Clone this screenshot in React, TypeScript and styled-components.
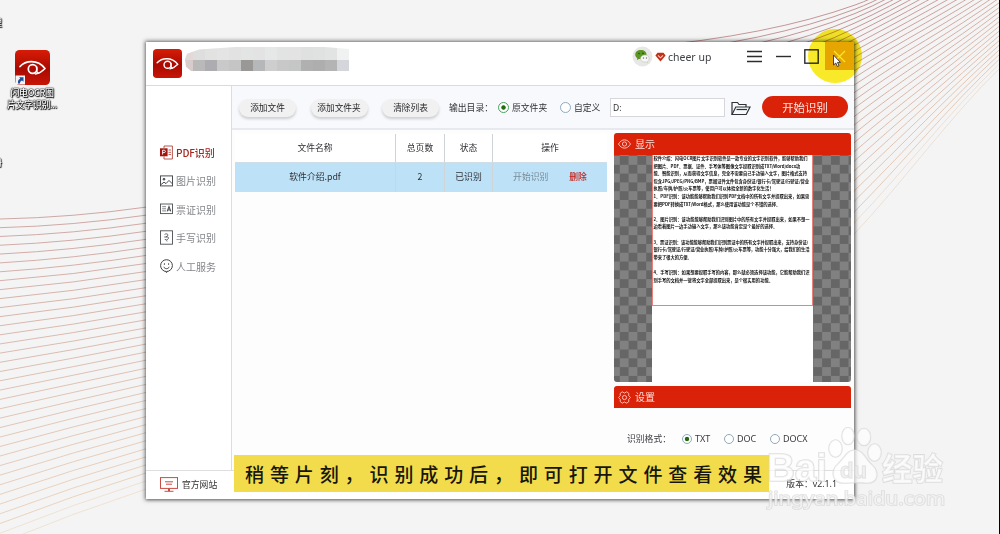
import React from "react";
import styled, { createGlobalStyle } from "styled-components";

const Global = createGlobalStyle`
  * { box-sizing: border-box; }
  html, body { margin: 0; padding: 0; overflow: hidden; }
  body { font-family: "Noto Sans", "Noto Sans CJK SC", sans-serif; }
`;

const Desktop = styled.main`
  position: relative;
  width: 1000px;
  height: 534px;
  overflow: hidden;
  background: #f4f4f4;
  border-right: 1px solid #000;
`;

const Wallpaper = styled.svg`
  position: absolute;
  inset: 0;
`;

const Shortcut = styled.div`
  position: absolute;
  left: 0;
  top: 50px;
  width: 64px;
  display: flex;
  flex-direction: column;
  align-items: center;
`;

const ShortcutLabel = styled.div`
  margin-top: 2px;
  color: #fff;
  font: 500 9px/11.5px "Noto Sans CJK SC", sans-serif;
  letter-spacing: -0.4px;
  text-align: center;
  white-space: nowrap;
  text-shadow: 0 0 1px #000, 0 0 1px #000, 0.7px 0.7px 1px #000, 0 0 2px #333;
`;

const EdgeLabel = styled.div<{ $top: number }>`
  position: absolute;
  left: -7px;
  top: ${(p) => p.$top}px;
  color: #fff;
  font: 500 9px/12px "Noto Sans CJK SC", sans-serif;
  text-shadow: 0 0 1px #000, 0 0 1px #000, 0.7px 0.7px 1px #000;
`;

const Window = styled.section`
  position: absolute;
  left: 146px;
  top: 42px;
  width: 708px;
  height: 457px;
  display: flex;
  flex-direction: column;
  background: #fff;
  box-shadow: 0 0 4px 1px rgba(0, 0, 0, 0.55), 1px 1px 3px rgba(0, 0, 0, 0.2);
`;

const TitleBar = styled.header`
  flex: none;
  height: 44px;
  display: flex;
  align-items: flex-start;
  border-bottom: 1px solid #d9dadc;
  padding: 0 0 0 7px;
`;

const LogoSlot = styled.div`
  padding-top: 7px;
  height: 36px;
`;

const Mosaic = styled.div`
  width: 164px;
  margin: 5px 0 0 3px;
  display: grid;
  grid-template-columns: 8px repeat(13, 12px);
  grid-template-rows: 13px 11px;
  clip-path: polygon(0 50%, 2px 28%, 14px 10%, 50px 0, 140px 0, 164px 8%, 164px 100%, 6px 100%, 1px 82%);
`;

const Cell = styled.i<{ $c: string }>`
  background: ${(p) => p.$c};
`;

const Account = styled.div`
  margin: 4px 0 0 283px;
  display: flex;
  align-items: center;
  height: 21px;
  color: #3f4246;
`;

const AccountName = styled.span`
  margin-left: 2px;
  width: 43px;
  white-space: nowrap;
  font: 400 10.5px/14px "Noto Sans", sans-serif;
`;

const WindowControls = styled.div`
  margin-left: auto;
  display: flex;
`;

const ControlButton = styled.div<{ $close?: boolean; $shift?: number }>`
  width: 29px;
  height: 28px;
  display: grid;
  place-items: center;
  padding-left: ${(p) => p.$shift ?? 0}px;
  background: ${(p) => (p.$close ? "#edb400" : "transparent")};
`;

const Body = styled.div`
  flex: 1;
  min-height: 0;
  display: flex;
`;

const Sidebar = styled.nav`
  width: 86px;
  flex: none;
  border-right: 1px solid #dcdde3;
  padding: 52px 0 0 14px;
`;

const NavItem = styled.div<{ $active?: boolean }>`
  height: 28.5px;
  display: flex;
  align-items: center;
  gap: 3px;
  color: ${(p) => (p.$active ? "#a8241c" : "#85868a")};
  font: 400 10px/16px "Noto Sans CJK SC", sans-serif;
  white-space: nowrap;
`;

const NavText = styled.span<{ $active?: boolean }>`
  margin-top: 1px;
  font-weight: ${(p) => (p.$active ? 500 : 400)};
  letter-spacing: ${(p) => (p.$active ? "-0.1px" : "0")};
`;

const Content = styled.div`
  flex: 1;
  display: flex;
  flex-direction: column;
  background: #fdfdfe;
`;

const Toolbar = styled.div`
  flex: none;
  height: 44px;
  display: flex;
  align-items: center;
  background: #f7f9fc;
  border-bottom: 2px solid #e6e9ed;
  padding-left: 7px;
  color: #303135;
  font: 400 9px/14px "Noto Sans CJK SC", sans-serif;
  white-space: nowrap;
`;

const PillButton = styled.div<{ $gap?: number }>`
  width: 57px;
  height: 18px;
  margin: 2px ${(p) => p.$gap ?? 14.5}px 0 0;
  border-radius: 9px;
  background: #f1f1f2;
  box-shadow: 0 2px 3px rgba(0, 0, 0, 0.18);
  display: flex;
  align-items: center;
  justify-content: center;
  font-size: 8.7px;
  color: #1f2024;
`;

const OutputLabel = styled.span`
  width: 49px;
  margin-top: 2px;
  font-size: 8.8px;
`;

const Radio = styled.i<{ $on?: boolean; $ring: string; $size?: number }>`
  flex: none;
  width: ${(p) => p.$size ?? 11}px;
  height: ${(p) => p.$size ?? 11}px;
  border-radius: 50%;
  border: 1px solid ${(p) => p.$ring};
  background: ${(p) =>
    p.$on ? "radial-gradient(circle, #236b12 0 1.8px, #fff 2.6px)" : "#fff"};
`;

const RadioText = styled.span<{ $w: number }>`
  margin: 2px 0 0 3px;
  width: ${(p) => p.$w}px;
  font-size: 8.8px;
`;

const PathInput = styled.div`
  width: 115px;
  height: 19px;
  border: 1px solid #d5d7da;
  background: #fff;
  padding-left: 2px;
  font: 400 8.5px/17px "Noto Sans", sans-serif;
`;

const FolderSlot = styled.div`
  width: 20px;
  margin: 4px 11px 0 6px;
  height: 16px;
`;

const StartButton = styled.div`
  width: 86px;
  height: 22px;
  margin-top: -1px;
  border-radius: 11px;
  background: #da2209;
  color: #fde5e0;
  display: flex;
  align-items: center;
  justify-content: center;
  font: 400 11.4px/16px "Noto Sans CJK SC", sans-serif;
`;

const Work = styled.div`
  flex: 1;
  min-height: 0;
  display: flex;
  gap: 7px;
  padding: 3px 3px 0 3px;
`;

const Table = styled.div`
  width: 372px;
  color: #2f3034;
  font: 400 8.8px/14px "Noto Sans CJK SC", sans-serif;
`;

const Row = styled.div<{ $selected?: boolean }>`
  display: grid;
  grid-template-columns: 161px 49px 48px 114px;
  height: ${(p) => (p.$selected ? 30 : 29)}px;
  background: ${(p) => (p.$selected ? "#bde1f6" : "#fff")};
  border-top: 1px solid ${(p) => (p.$selected ? "#cfdde6" : "#fff")};
`;

const TableCell = styled.div<{ $last?: boolean }>`
  display: flex;
  align-items: center;
  justify-content: center;
  gap: 21px;
  padding-bottom: 1px;
  border-right: ${(p) => (p.$last ? "0" : "1px solid #cfd4d9")};
`;

const Action = styled.span<{ $danger?: boolean }>`
  color: ${(p) => (p.$danger ? "#c5211b" : "#788a97")};
  font-weight: ${(p) => (p.$danger ? 500 : 400)};
`;

const SidePanel = styled.aside`
  width: 237px;
  display: flex;
  flex-direction: column;
`;

const PanelHead = styled.div`
  flex: none;
  height: 22px;
  border-radius: 3px 3px 0 0;
  background: #da2209;
  color: #fbe0dc;
  display: flex;
  align-items: center;
  gap: 4px;
  padding-left: 4px;
  font: 400 10px/14px "Noto Sans CJK SC", sans-serif;
`;

const Preview = styled.div`
  flex: none;
  height: 227px;
  margin-bottom: 4px;
  padding: 0 38px;
  border-radius: 0 0 3px 3px;
  background: repeating-conic-gradient(#666 0 25%, #818181 0 50%) -3px 1px / 17.6px 17.6px;
`;

const Sheet = styled.div`
  height: 227px;
  background: #fff;
`;

const Doc = styled.div`
  height: 151px;
  padding-left: 0.5px;
  border: 1px solid #e4847d;
  border-top: 0;
  color: #111;
  font: 700 4.28px/7.67px "Noto Sans CJK SC", sans-serif;
  white-space: pre;
`;

const DocLine = styled.div<{ $tight?: boolean }>`
  height: 7.67px;
  margin-top: -0.06px;
  letter-spacing: ${(p) => (p.$tight ? "-0.08px" : "0")};
`;

const Formats = styled.div`
  display: flex;
  align-items: center;
  margin: 24px 0 0 13px;
  color: #3a3b3f;
  font: 400 8.8px/14px "Noto Sans CJK SC", sans-serif;
  white-space: nowrap;
`;

const FormatLabel = styled.span`
  width: 55px;
`;

const FormatName = styled.span<{ $w: number }>`
  margin-left: 3px;
  width: ${(p) => p.$w}px;
  font-family: "Noto Sans", sans-serif;
  font-size: 9px;
`;

const Footer = styled.footer`
  flex: none;
  height: 29px;
  display: flex;
  align-items: center;
  border-top: 1px solid #dedede;
  padding: 0 17px 2px 14px;
  color: #333;
  font: 400 8.8px/14px "Noto Sans", "Noto Sans CJK SC", sans-serif;
`;

const SiteText = styled.span`
  margin: 1px auto 0 4px;
`;

const Caption = styled.div`
  position: absolute;
  left: 234px;
  top: 455px;
  width: 535px;
  height: 37px;
  background: #f3dc4b;
  padding-left: 11px;
  color: #16160c;
  font: 500 19px/38px "Noto Sans CJK SC", sans-serif;
  letter-spacing: 5.9px;
  white-space: nowrap;
`;

const Halo = styled.div`
  position: absolute;
  left: 808px;
  top: 29px;
  width: 54px;
  height: 54px;
  border-radius: 50%;
  background: #f8ea28;
  mix-blend-mode: multiply;
`;

const Pointer = styled.svg`
  position: absolute;
  left: 832px;
  top: 54px;
`;

const Watermark = styled.svg`
  position: absolute;
  left: 760px;
  top: 420px;
`;

const mosaicTop = ["#e2d9d9", "#dedede", "#e2e2e1", "#e4e4e4", "#e1e2e1", "#e3e5e4", "#e2e3e2", "#e6e7e7", "#e2e4e4", "#e3e3e3", "#dfe0e0", "#e0e1e1", "#e2e3e3", "#f0f2f2"];
const mosaicBottom = ["#d8cbcb", "#b9b9b9", "#adacb0", "#c9c9c9", "#c5c5c5", "#999897", "#b6b7b9", "#cecece", "#c8c8c8", "#c5c6c6", "#b0b0b0", "#aeaeae", "#b4b4b5", "#d4d6dc"];

const docLines = [
  "软件介绍：闪电OCR图片文字识别软件是一款专业的文字识别软件，能够帮助我们",
  "把图片、PDF、票据、证件、手写体等图像文字提取识别成TXT/Word/docx功",
  "能、智能识别，从而获得文字信息，完全不需要自己手动输入文字，图片格式支持",
  "包含JPG/JPEG/PNG/BMP，票据证件文件包含身份证/银行卡/驾驶证/行驶证/营业",
  "执照/车牌/护照/火车票等，使用户可以体验全新的数字化生活！",
  "1、PDF识别：该功能能够帮助我们识别PDF文档中的所有文字并提取出来，如果需",
  "要把PDF转换成TXT/Word格式，那么使用该功能是个不错的选择。",
  "",
  "2、图片识别：该功能能够帮助我们识别图片中的所有文字并提取出来，如果不想一",
  "边看着图片一边手动输入文字，那么该功能肯定是个最好的选择。",
  "",
  "3、票证识别：该功能能够帮助我们识别票证中的所有文字并提取出来，支持身份证/",
  "银行卡/驾驶证/行驶证/营业执照/车牌/护照/火车票等，功能十分强大，给我们的生活",
  "带来了很大的方便。",
  "",
  "4、手写识别：如果想要提取手写的内容，那么就必须选择该功能，它能帮助我们识",
  "别手写的文档并一键将文字全部提取出来，是个很实用的功能。",
];

function mix(a: number[], b: number[], t: number) {
  return `rgb(${a.map((v, i) => Math.round(v + (b[i] - v) * t)).join(",")})`;
}

function Waves() {
  const left = Array.from({ length: 36 }, (_, k) => {
    const t = k / 35;
    const y0 = 219 + 8.7 * k + 0.016 * k * k;
    const y1 = 207 + 8.05 * k;
    const mid = (y0 + y1) / 2 + 4.5 * (1 - t) - 3 * t;
    return (
      <path
        key={k}
        d={`M0 ${y0} Q73 ${mid} 147 ${y1}`}
        stroke={mix([207, 168, 165], [236, 214, 192], t)}
        opacity={k > 33 ? 0.6 : 1}
      />
    );
  });
  const right = Array.from({ length: 31 }, (_, j) => {
    const t = j / 30;
    const yA = 233 - 11.2 * j + 0.12 * j * j;
    const yB = 68 - 4.7 * j;
    const over = yA - 2;
    const slope = 1.05 - 0.7 * t;
    return (
      <path
        key={j}
        d={`M640 ${yA + 40 + over * 0.8} Q770 ${yA + 29 + over * 0.5} 855 ${yA} C900 ${yA - 45 * slope} 950 ${yB + 50 * (1.05 - 0.6 * t) - 4 * (1 - t)} 1000 ${yB}`}
        stroke={mix([232, 208, 186], [196, 150, 152], Math.min(1, j / 26))}
        opacity={j < 2 ? 0.55 : 1}
      />
    );
  });
  return (
    <Wallpaper width="1000" height="534" fill="none" strokeWidth="1">
      {left}
      {right}
    </Wallpaper>
  );
}

function EyeLogo({ size, shortcut }: { size: number; shortcut?: boolean }) {
  const id = shortcut ? "logoA" : "logoB";
  return (
    <svg width={size} height={size} viewBox="0 0 35 35" fill="none">
      <defs>
        <linearGradient id={id} x1="0" y1="0" x2="0" y2="1">
          <stop offset="0" stopColor="#d81c06" />
          <stop offset="0.55" stopColor="#a90a02" />
          <stop offset="1" stopColor="#c81505" />
        </linearGradient>
      </defs>
      <rect width="35" height="35" rx="4.5" fill={`url(#${id})`} />
      <path d="M5 16.5C10 11 22 8.5 30 18.5C26 22.5 24 23.5 20.5 24" stroke="#fff" strokeWidth="1.7" strokeLinecap="round" strokeLinejoin="round" />
      <circle cx="17.6" cy="19" r="4.3" stroke="#fff" strokeWidth="1.7" />
      <path d="M21.7 16.5C21.4 21 21.8 23.8 24.3 23" stroke="#fff" strokeWidth="1.4" />
      {shortcut && (
        <g>
          <rect x="0.5" y="25.5" width="9.5" height="9" fill="#f4f4f4" />
          <path d="M3 33.5C2.5 30.5 4 29 5.2 28.8L4.2 27.2H8.5V31.8L7 30.5C5.5 31 5 32 5 33.5Z" fill="#1d4f9c" />
        </g>
      )}
    </svg>
  );
}

function WechatAvatar() {
  return (
    <svg width="21" height="21" viewBox="0 0 21 21">
      <circle cx="10.5" cy="10.5" r="10" fill="#e7e7e6" />
      <path d="M9 4C5.5 4 3.2 6 3.2 8.6C3.2 10.2 4 11.4 5.3 12.2L4.9 14L7 12.9C11 13.6 14.5 11.5 14.5 8.4C14.5 6 12.2 4 9 4Z" fill="#5b9626" />
      <path d="M13 9C10.4 9 8.5 10.5 8.5 12.6C8.5 15 11 16.6 14 15.9L15.8 16.9L15.5 15.3C18.6 13 17 9 13 9Z" fill="#f7f7f5" stroke="#b9bdb2" strokeWidth="0.5" />
      <circle cx="7" cy="7.5" r="0.8" fill="#2f4d17" />
      <circle cx="11" cy="7.4" r="0.8" fill="#2f4d17" />
      <circle cx="11.5" cy="12" r="0.7" fill="#777" />
      <circle cx="14.5" cy="12" r="0.7" fill="#777" />
    </svg>
  );
}

const navIcons = [
  <svg key="pdf" width="13" height="15" viewBox="0 0 13 15" fill="none">
    <path d="M4 3V1H12.4V14H4V11.5" stroke="#b0453f" strokeWidth="0.9" />
    <path d="M8.5 5H11M8.5 7.3H11M8.5 9.6H11" stroke="#b0453f" strokeWidth="0.9" />
    <rect x="0" y="3.3" width="7.6" height="8" fill="#a5150f" />
    <path d="M2.6 9.6V5.2H4.2C5.8 5.2 5.8 7.6 4.2 7.6H2.6" stroke="#fff" strokeWidth="0.9" />
  </svg>,
  <svg key="img" width="13" height="12" viewBox="0 0 13 12" fill="none" stroke="#4c4e52">
    <rect x="0.5" y="0.9" width="12" height="10" />
    <circle cx="4" cy="4.2" r="0.9" fill="#4c4e52" />
    <path d="M1 9.5L4 7.2L6 8.6L9 5.4L12.3 8.8" />
  </svg>,
  <svg key="card" width="13" height="12" viewBox="0 0 13 12" fill="none" stroke="#4c4e52">
    <rect x="0.5" y="1" width="12" height="9.6" strokeWidth="0.9" />
    <path d="M2.2 3.7H6M2.2 5.8H6M2.2 7.9H6" strokeWidth="0.7" />
    <path d="M7.2 8.4L9 3.5L10.8 8.4M7.8 7H10.2" strokeWidth="1.1" />
  </svg>,
  <svg key="hand" width="13" height="15" viewBox="0 0 13 15" fill="none" stroke="#4c4e52">
    <rect x="0.5" y="0.8" width="12" height="13.4" strokeWidth="0.9" />
    <path d="M4.6 4.4C6 3.3 8.6 4 7.8 5.6L6 7C8.5 6.6 9.2 8 7.8 9.2C6.8 10 6.3 10.4 7 11.4M4.3 7H6M4.8 9.6H6.5" strokeWidth="0.9" />
  </svg>,
  <svg key="face" width="13" height="14" viewBox="0 0 13 14" fill="none" stroke="#3f4145">
    <circle cx="6.5" cy="6.6" r="5.9" />
    <path d="M3.8 7.8C4.6 10.3 8.4 10.3 9.2 7.8M4.4 4.3V5.8M8.6 4.3V5.8M5.5 12.6L6.5 13.6L7.5 12.6" />
  </svg>,
];

const navItems = ["PDF识别", "图片识别", "票证识别", "手写识别", "人工服务"];

export default function App() {
  return (
    <>
      <Global />
      <Desktop>
        <Waves />
        <EdgeLabel $top={17}>理</EdgeLabel>
        <EdgeLabel $top={157}>册</EdgeLabel>
        <Shortcut>
          <EyeLogo size={35} shortcut />
          <ShortcutLabel>
            闪电OCR图
            <br />
            片文字识别...
          </ShortcutLabel>
        </Shortcut>

        <Window>
          <TitleBar>
            <LogoSlot>
              <EyeLogo size={29} />
            </LogoSlot>
            <Mosaic>
              {[...mosaicTop, ...mosaicBottom].map((c, i) => (
                <Cell key={i} $c={c} />
              ))}
            </Mosaic>
            <Account>
              <WechatAvatar />
              <svg width="13" height="10" viewBox="-2 0 13 10">
                <path d="M2.5 0.8H8.5L10.6 3.6L5.5 9.4L0.4 3.6Z" fill="#c03018" />
                <path d="M3 3.3L5.5 5.8L8 3.3" stroke="#f7cfc3" strokeWidth="1.1" fill="none" />
              </svg>
              <AccountName>cheer up</AccountName>
            </Account>
            <WindowControls>
              <ControlButton $shift={3}>
                <svg width="15" height="13" viewBox="0 0 15 13" stroke="#2d2d2f" strokeWidth="1.4">
                  <path d="M0 1.5H15M0 6.5H15M0 11.5H15" />
                </svg>
              </ControlButton>
              <ControlButton $shift={3}>
                <svg width="15" height="3" viewBox="0 0 15 3" stroke="#2d2d2f" strokeWidth="1.4">
                  <path d="M0 1.5H15" />
                </svg>
              </ControlButton>
              <ControlButton $shift={1}>
                <svg width="15" height="15" viewBox="0 0 15 15" fill="none" stroke="#2d2d2f" strokeWidth="1.4">
                  <rect x="0.8" y="0.8" width="13.4" height="13.4" />
                </svg>
              </ControlButton>
              <ControlButton $close>
                <svg width="13" height="13" viewBox="0 0 13 13" stroke="#fff" strokeWidth="1.2">
                  <path d="M1 1L12 12M12 1L1 12" />
                </svg>
              </ControlButton>
            </WindowControls>
          </TitleBar>

          <Body>
            <Sidebar>
              {navItems.map((name, i) => (
                <NavItem key={name} $active={i === 0}>
                  {navIcons[i]}
                  <NavText $active={i === 0}>{name}</NavText>
                </NavItem>
              ))}
            </Sidebar>
            <Content>
              <Toolbar>
                <PillButton>添加文件</PillButton>
                <PillButton>添加文件夹</PillButton>
                <PillButton $gap={10}>清除列表</PillButton>
                <OutputLabel>输出目录：</OutputLabel>
                <Radio $on $ring="#46a558" />
                <RadioText $w={48}>原文件夹</RadioText>
                <Radio $ring="#8ea9c0" />
                <RadioText $w={36}>自定义</RadioText>
                <PathInput>D:</PathInput>
                <FolderSlot>
                  <svg width="20" height="15" viewBox="0 0 20 15" fill="none" stroke="#303236" strokeWidth="1.2">
                    <path d="M1 13.5V1.5H6.5L8 3.5H15V6" />
                    <path d="M1 13.5L4.8 6H19L15.2 13.5Z" />
                    <path d="M5.5 8.5H16" />
                  </svg>
                </FolderSlot>
                <StartButton>开始识别</StartButton>
              </Toolbar>
              <Work>
                <Table>
                  <Row>
                    <TableCell>文件名称</TableCell>
                    <TableCell>总页数</TableCell>
                    <TableCell>状态</TableCell>
                    <TableCell $last>操作</TableCell>
                  </Row>
                  <Row $selected>
                    <TableCell>软件介绍.pdf</TableCell>
                    <TableCell>2</TableCell>
                    <TableCell>已识别</TableCell>
                    <TableCell $last>
                      <Action>开始识别</Action>
                      <Action $danger>删除</Action>
                    </TableCell>
                  </Row>
                </Table>
                <SidePanel>
                  <PanelHead>
                    <svg width="13" height="10" viewBox="0 0 13 10" fill="none" stroke="#fbd0c9" strokeWidth="0.9">
                      <path d="M0.5 5C3.5 -0.5 9.5 -0.5 12.5 5C9.5 10.5 3.5 10.5 0.5 5Z" />
                      <circle cx="6.5" cy="5" r="2.1" />
                    </svg>
                    显示
                  </PanelHead>
                  <Preview>
                    <Sheet>
                      <Doc>
                        {docLines.map((line, i) => (
                          <DocLine key={i} $tight={i === 11 || i === 12}>
                            {line}
                          </DocLine>
                        ))}
                      </Doc>
                    </Sheet>
                  </Preview>
                  <PanelHead>
                    <svg width="13" height="13" viewBox="0 0 13 13" fill="none" stroke="#fbd0c9" strokeWidth="0.9">
                      <path d="M4.2 0.8L6.5 2L8.8 0.8L10.8 2.4L10.7 4.7L12.5 6.5L10.7 8.3L10.8 10.6L8.8 12.2L6.5 11L4.2 12.2L2.2 10.6L2.3 8.3L0.5 6.5L2.3 4.7L2.2 2.4Z" />
                      <circle cx="6.5" cy="6.5" r="2.1" />
                    </svg>
                    设置
                  </PanelHead>
                  <Formats>
                    <FormatLabel>识别格式：</FormatLabel>
                    <Radio $on $ring="#93a9bb" $size={10} />
                    <FormatName $w={29}>TXT</FormatName>
                    <Radio $ring="#93a9bb" $size={10} />
                    <FormatName $w={33}>DOC</FormatName>
                    <Radio $ring="#93a9bb" $size={10} />
                    <FormatName $w={30}>DOCX</FormatName>
                  </Formats>
                </SidePanel>
              </Work>
            </Content>
          </Body>

          <Footer>
            <svg width="18" height="15" viewBox="0 0 18 15" fill="none" stroke="#cb4b42" strokeWidth="1">
              <rect x="0.5" y="0.6" width="17" height="10.8" />
              <path d="M5 4.8H13M6 7.2H12M4.5 14.3H13.5" />
              <path d="M9 11.5V14" strokeWidth="2" />
            </svg>
            <SiteText>官方网站</SiteText>
            <span>版本：v2.1.1</span>
          </Footer>
        </Window>

        <Halo />
        <Pointer width="9" height="14" viewBox="0 0 9 14">
          <path d="M1.5 1V11L3.8 9L5.3 12.5L7 11.8L5.5 8.4H8.4Z" fill="#fff" stroke="#333" strokeWidth="0.9" />
        </Pointer>

        <Caption>稍等片刻，识别成功后，即可打开文件查看效果</Caption>

        <Watermark width="200" height="100" fill="#fff" fillOpacity="0.6" stroke="#cfcfcf" strokeOpacity="0.65" strokeWidth="1.6" paintOrder="stroke">
          <text x="7" y="61" fontFamily="Liberation Sans, sans-serif" fontWeight="700" fontSize="38" textLength="60" lengthAdjust="spacingAndGlyphs">Bai</text>
          <ellipse cx="75.5" cy="28.5" rx="6.5" ry="8.5" />
          <ellipse cx="88" cy="16" rx="6" ry="8.5" />
          <ellipse cx="104" cy="17" rx="6.5" ry="8.5" />
          <ellipse cx="114.5" cy="32.5" rx="6.5" ry="8.5" />
          <path d="M95 30C87 30 84 39 78 44C71 50 71 63 84 63C91 63 100 62 107 63C119 63 119 51 112 45C105 39 103 30 95 30Z" />
          <text x="80" y="58" fontFamily="Liberation Sans, sans-serif" fontWeight="700" fontSize="22" fill="#e8e8e8" strokeWidth="1">du</text>
          <text x="122" y="60" fontFamily="Noto Sans CJK SC, sans-serif" fontWeight="700" fontSize="31" textLength="61" lengthAdjust="spacingAndGlyphs">经验</text>
          <text x="8" y="85" fontFamily="Noto Sans, sans-serif" fontSize="18" textLength="177" lengthAdjust="spacingAndGlyphs">jingyan.baidu.com</text>
        </Watermark>
      </Desktop>
    </>
  );
}
